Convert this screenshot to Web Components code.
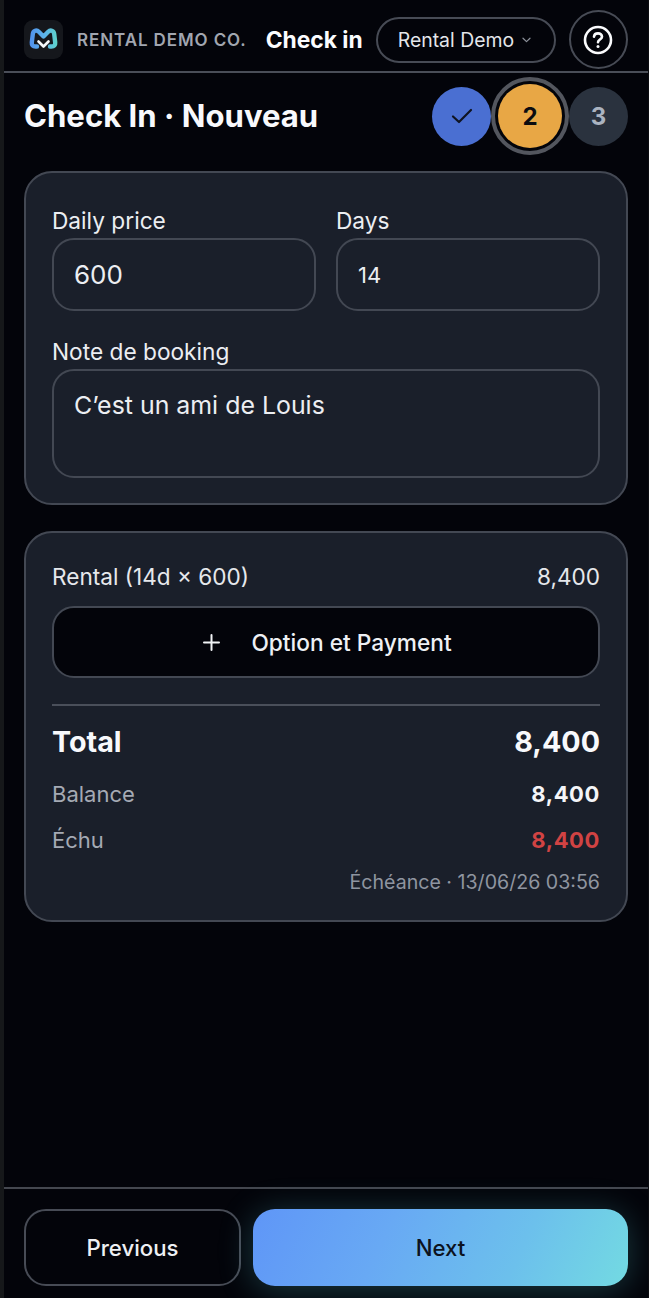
<!DOCTYPE html>
<html lang="fr">
<head>
<meta charset="utf-8">
<title>Check in</title>
<style>
  html, body { margin: 0; height: 100%; background: #03040a; }
  body { font-family: Inter, "Liberation Sans", sans-serif; color: #f1f3f7; }
</style>
</head>
<body>
<checkin-page>
  <top-bar></top-bar>
  <step-head heading="Check In · Nouveau"></step-head>
  <div slot="main">
    <panel-card pad="booking">
      <form-field label="Daily price" value="600" size="26"></form-field>
      <form-field label="Days" value="14" size="22"></form-field>
      <form-field label="Note de booking" value="C’est un ami de Louis" size="24.9" wide></form-field>
    </panel-card>
    <summary-card></summary-card>
  </div>
  <foot-bar></foot-bar>
</checkin-page>

<script>
class CheckinPage extends HTMLElement {
  connectedCallback() {
    this.attachShadow({ mode: "open" });
    this.shadowRoot.innerHTML = `
      <style>
        :host {
          display: flex;
          flex-direction: column;
          box-sizing: border-box;
          height: 1298px;
          width: 649px;
          background: #03040a;
          border-left: 4px solid #16181a;
          border-right: 1px solid #0b0c10;
          overflow: hidden;
        }
        main { flex: 1; padding: 0 20px; }
      </style>
      <slot></slot>
      <main><slot name="main"></slot></main>
    `;
    // footer has to stay after main
    const foot = this.querySelector("foot-bar");
    foot.slot = "foot";
    const s = document.createElement("slot");
    s.name = "foot";
    this.shadowRoot.appendChild(s);
  }
}

class TopBar extends HTMLElement {
  connectedCallback() {
    this.attachShadow({ mode: "open" });
    this.shadowRoot.innerHTML = `
      <style>
        :host {
          display: flex;
          align-items: center;
          box-sizing: border-box;
          height: 73px;
          padding: 8px 20px 0;
          border-bottom: 2px solid #4a4e58;
        }
        .logo {
          width: 39px; height: 39px;
          border-radius: 9px;
          background: #15171c;
          display: flex; align-items: center; justify-content: center;
          flex: none;
        }
        .brand {
          margin-left: 14px;
          font-size: 17px;
          font-weight: 600;
          letter-spacing: 0.9px;
          color: #a1a6b0;
          white-space: nowrap;
        }
        .title {
          margin-left: 19px;
          font-size: 22.8px;
          font-weight: 700;
          color: #fbfcfe;
          white-space: nowrap;
        }
        .select {
          margin-left: 13px;
          box-sizing: border-box;
          width: 180px; height: 46px;
          border: 2px solid #474b55;
          border-radius: 23px;
          display: flex; align-items: center;
          padding-left: 20px;
          font-size: 19.4px;
          color: #e4e6ea;
          white-space: nowrap;
          flex: none;
        }
        .select svg { margin-left: 8px; }
        .help {
          margin-left: 13px;
          box-sizing: border-box;
          width: 59px; height: 59px;
          border: 2px solid #474b55;
          border-radius: 50%;
          display: flex; align-items: center; justify-content: center;
          flex: none;
        }
      </style>
      <div class="logo">
        <svg width="31" height="25" viewBox="0 0 31 25" fill="none">
          <defs>
            <linearGradient id="lg" x1="0" y1="0" x2="31" y2="0" gradientUnits="userSpaceOnUse">
              <stop offset="0" stop-color="#4f8dee"/>
              <stop offset="0.55" stop-color="#5cb4ea"/>
              <stop offset="1" stop-color="#5fd9c4"/>
            </linearGradient>
          </defs>
          <path d="M9 19.5H7.5C5 19.5 3.5 18 3.8 15.5L4.8 7C5.2 3.5 8.5 2.5 10.8 4.8L15.5 9.5L20.2 4.8C22.5 2.5 25.8 3.5 26.2 7L27.2 15.5C27.5 18 26 19.5 23.5 19.5H22" stroke="url(#lg)" stroke-width="4.4" stroke-linecap="round" stroke-linejoin="round"/>
          <path d="M10.5 14.5L15.5 19.5L20.5 14.5" stroke="#f4f7fb" stroke-width="2.6" stroke-linecap="round" stroke-linejoin="round"/>
        </svg>
      </div>
      <span class="brand">RENTAL DEMO CO.</span>
      <span class="title">Check in</span>
      <div class="select">
        <span>Rental Demo</span>
        <svg width="9" height="6" viewBox="0 0 9 6" fill="none"><path d="M1 1.2L4.5 4.6L8 1.2" stroke="#8d919b" stroke-width="1.2" stroke-linecap="round" stroke-linejoin="round"/></svg>
      </div>
      <div class="help">
        <svg width="30" height="30" viewBox="0 0 30 30" fill="none" stroke="#fafbfd" stroke-width="2.6" stroke-linecap="round" stroke-linejoin="round">
          <circle cx="15" cy="15" r="13"/>
          <path d="M11 11.6C11.2 9.6 12.9 8.4 15 8.4C17.3 8.4 19 9.8 19 11.7C19 14.4 15 14.6 15 17.2"/>
          <path d="M15 21.4V21.5" stroke-width="3"/>
        </svg>
      </div>
    `;
  }
}

class StepHead extends HTMLElement {
  connectedCallback() {
    this.attachShadow({ mode: "open" });
    this.shadowRoot.innerHTML = `
      <style>
        :host {
          display: flex;
          align-items: center;
          justify-content: space-between;
          box-sizing: border-box;
          height: 98px;
          padding: 0 20px 12px;
        }
        h1 {
          margin: 0;
          font-size: 31.1px;
          font-weight: 700;
          color: #f8f9fc;
          white-space: nowrap;
        }
        .steps { display: flex; align-items: center; }
        .dot {
          width: 59px; height: 59px;
          border-radius: 50%;
          display: flex; align-items: center; justify-content: center;
          font-size: 24px;
          font-weight: 700;
        }
        .done { background: #4a6fd2; }
        .now {
          box-sizing: border-box;
          width: 78px; height: 78px;
          border: 4px solid #53565e;
          background: #e8a745;
          background-clip: content-box;
          padding: 3px;
          color: #0b0c10;
        }
        .todo { background: #2a323e; color: #aab3c0; }
      </style>
      <h1>${this.getAttribute("heading")}</h1>
      <div class="steps">
        <div class="dot done">
          <svg width="22" height="16" viewBox="0 0 22 16" fill="none"><path d="M2 8.5L8 14L20 2" stroke="#0f1422" stroke-width="2.2" stroke-linecap="round" stroke-linejoin="round"/></svg>
        </div>
        <div class="dot now">2</div>
        <div class="dot todo">3</div>
      </div>
    `;
  }
}

class PanelCard extends HTMLElement {
  connectedCallback() {
    this.attachShadow({ mode: "open" });
    this.shadowRoot.innerHTML = `
      <style>
        :host {
          display: grid;
          grid-template-columns: 264px 264px;
          column-gap: 20px;
          row-gap: 27px;
          box-sizing: border-box;
          height: 334px;
          padding: 34px 26px 0;
          background: #1a1f2a;
          border: 2px solid #434853;
          border-radius: 28px;
          align-content: start;
        }
      </style>
      <slot></slot>
    `;
  }
}

class FormField extends HTMLElement {
  connectedCallback() {
    const wide = this.hasAttribute("wide");
    this.attachShadow({ mode: "open" });
    this.shadowRoot.innerHTML = `
      <style>
        :host { display: block; ${wide ? "grid-column: 1 / -1;" : ""} }
        label {
          display: block;
          font-size: 22.7px;
          line-height: 28px;
          margin-bottom: 3px;
          color: #eceef2;
          white-space: nowrap;
        }
        .box {
          box-sizing: border-box;
          height: ${wide ? 109 : 73}px;
          border: 2px solid #434853;
          border-radius: 22px;
          padding: ${wide ? "19px" : "0"} 20px 0;
          display: flex;
          align-items: ${wide ? "flex-start" : "center"};
          font-size: ${this.getAttribute("size")}px;
          color: #eceef2;
        }
      </style>
      <label>${this.getAttribute("label")}</label>
      <div class="box">${this.getAttribute("value")}</div>
    `;
  }
}

class SummaryCard extends HTMLElement {
  connectedCallback() {
    this.attachShadow({ mode: "open" });
    this.shadowRoot.innerHTML = `
      <style>
        :host {
          display: block;
          box-sizing: border-box;
          height: 391px;
          margin-top: 26px;
          padding: 0 26px;
          background: #1a1f2a;
          border: 2px solid #434853;
          border-radius: 28px;
          color: #e6e8ec;
        }
        .row {
          display: flex;
          justify-content: space-between;
          align-items: center;
          white-space: nowrap;
        }
        .rental { height: 30px; margin-top: 28px; font-size: 22.6px; }
        .add {
          box-sizing: border-box;
          height: 72px;
          margin-top: 15px;
          padding-left: 3px;
          background: #03040a;
          border: 2px solid #434853;
          border-radius: 22px;
          display: flex;
          align-items: center;
          justify-content: center;
          gap: 31px;
          font-size: 22.7px;
          font-weight: 500;
          color: #eef0f4;
        }
        hr {
          height: 2px;
          margin: 26px 0 0;
          border: 0;
          background: #4a4f5a;
        }
        .total { height: 40px; margin-top: 15px; font-size: 28.7px; font-weight: 700; color: #f8f9fc; }
        .line { height: 30px; font-size: 22px; color: #a5aab4; }
        .line b { font-weight: 700; color: #f4f5f8; letter-spacing: 0.6px; font-size: 22px; }
        .balance { margin-top: 18px; }
        .due { margin-top: 16px; }
        .due b { color: #d14343; }
        .when { justify-content: flex-end; height: 26px; margin-top: 14px; font-size: 19.6px; color: #8f95a0; }
      </style>
      <div class="row rental"><span>Rental (14d × 600)</span><span>8,400</span></div>
      <div class="add">
        <svg width="17" height="17" viewBox="0 0 17 17" fill="none"><path d="M8.5 1V16M1 8.5H16" stroke="#f1f3f6" stroke-width="2" stroke-linecap="round"/></svg>
        <span>Option et Payment</span>
      </div>
      <hr>
      <div class="row total"><span>Total</span><span>8,400</span></div>
      <div class="row line balance"><span>Balance</span><b>8,400</b></div>
      <div class="row line due"><span>Échu</span><b>8,400</b></div>
      <div class="row when"><span>Échéance · 13/06/26 03:56</span></div>
    `;
  }
}

class FootBar extends HTMLElement {
  connectedCallback() {
    this.attachShadow({ mode: "open" });
    this.shadowRoot.innerHTML = `
      <style>
        :host {
          display: flex;
          gap: 12px;
          box-sizing: border-box;
          height: 111px;
          padding: 20px 20px 0;
          border-top: 2px solid #44474f;
        }
        .btn {
          box-sizing: border-box;
          height: 77px;
          border-radius: 22px;
          display: flex; align-items: center; justify-content: center;
          font-size: 22.2px;
          font-weight: 500;
        }
        .prev {
          width: 217px;
          border: 2px solid #474b55;
          color: #eef0f4;
        }
        .next {
          width: 375px;
          background: linear-gradient(115deg, #5f96f7 0%, #68a9f4 35%, #6cc0ec 70%, #73dae2 100%);
          color: #0c1220;
          box-shadow: 0 4px 34px rgba(90, 200, 210, 0.28);
        }
      </style>
      <div class="btn prev">Previous</div>
      <div class="btn next">Next</div>
    `;
  }
}

customElements.define("checkin-page", CheckinPage);
customElements.define("top-bar", TopBar);
customElements.define("step-head", StepHead);
customElements.define("panel-card", PanelCard);
customElements.define("form-field", FormField);
customElements.define("summary-card", SummaryCard);
customElements.define("foot-bar", FootBar);
</script>
</body>
</html>
